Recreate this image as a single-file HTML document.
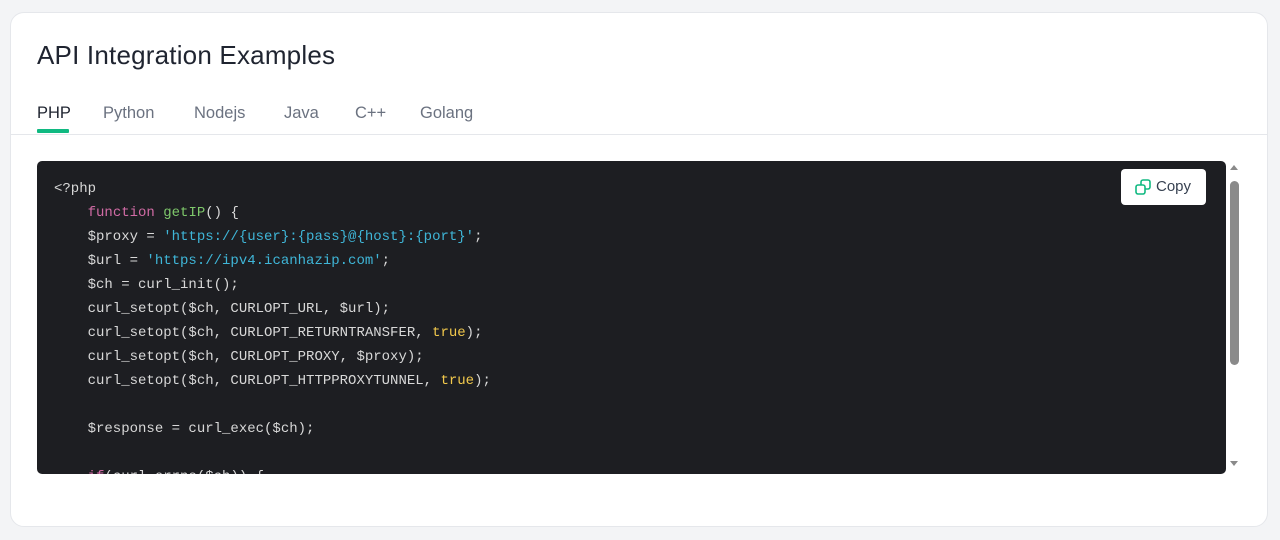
<!DOCTYPE html>
<html><head><meta charset="utf-8"><style>
body{margin:0;background:#f3f4f6;width:1280px;height:540px;overflow:hidden;font-family:"Liberation Sans",sans-serif}
.card{position:absolute;left:10px;top:12px;width:1258px;height:515px;background:#fff;border:1px solid #e5e7eb;border-radius:14px;box-sizing:border-box}
h1{position:absolute;left:26px;top:27px;margin:0;font-weight:400;font-size:26px;color:#1f2430;letter-spacing:0.2px}
.tabs{position:absolute;left:0;top:87px;width:100%;height:34px;border-bottom:1px solid #e5e7eb}
.tab{position:absolute;top:4px;font-size:16.5px;color:#6b7280}
.tab.a{color:#1f2430}
.ul{position:absolute;left:26px;top:29px;width:32px;height:4px;background:#10b981;border-radius:1px}
.code{position:absolute;left:26px;top:148px;width:1189px;height:313px;background:#1d1e22;border-radius:5px;overflow:hidden}
pre{margin:0;position:absolute;left:17px;top:16px;font-family:"Liberation Mono",monospace;font-size:14px;line-height:24px;color:#d8d8d8}
.k{color:#d16ba5}.f{color:#7ec86b}.s{color:#3fb6d8}.t{color:#f2c94c}
.copy{position:absolute;left:1110px;top:156px;width:85px;height:36px;background:#fff;border-radius:4px;font-size:15px;color:#374151}
.copy svg{position:absolute;left:14px;top:10px}
.copy span{position:absolute;left:35px;top:9px}
.sb{position:absolute;left:1215px;top:148px;width:16px;height:313px;background:#fff}
.thumb{position:absolute;left:4px;top:20px;width:9px;height:184px;background:#8a8a8a;border-radius:5px}
</style></head><body>
<div class="card">
<h1>API Integration Examples</h1>
<div class="tabs">
<span class="tab a" style="left:26px">PHP</span>
<span class="tab" style="left:92px">Python</span>
<span class="tab" style="left:183px">Nodejs</span>
<span class="tab" style="left:273px">Java</span>
<span class="tab" style="left:344px">C++</span>
<span class="tab" style="left:409px">Golang</span>
<div class="ul"></div>
</div>
<div class="code"><pre>&lt;?php
    <span class="k">function</span> <span class="f">getIP</span>() {
    $proxy = <span class="s">'https://{user}:{pass}@{host}:{port}'</span>;
    $url = <span class="s">'https://ipv4.icanhazip.com'</span>;
    $ch = curl_init();
    curl_setopt($ch, CURLOPT_URL, $url);
    curl_setopt($ch, CURLOPT_RETURNTRANSFER, <span class="t">true</span>);
    curl_setopt($ch, CURLOPT_PROXY, $proxy);
    curl_setopt($ch, CURLOPT_HTTPPROXYTUNNEL, <span class="t">true</span>);

    $response = curl_exec($ch);

    <span class="k">if</span>(curl_errno($ch)) {</pre></div>
<div class="copy"><svg width="16" height="16" viewBox="0 0 16 16" fill="none" stroke="#10b981" stroke-width="1.6"><rect x="1" y="6" width="9" height="9" rx="2"/><path d="M6 6V3a2 2 0 0 1 2-2h5a2 2 0 0 1 2 2v5a2 2 0 0 1-2 2h-3"/></svg><span>Copy</span></div>
<div class="sb"><svg width="16" height="313" style="position:absolute;left:0;top:0"><path d="M4 9L8 4L12 9Z" fill="#8a8a8a"/><path d="M4 300L8 305L12 300Z" fill="#8a8a8a"/></svg><div class="thumb"></div></div>
</div>
</body></html>
